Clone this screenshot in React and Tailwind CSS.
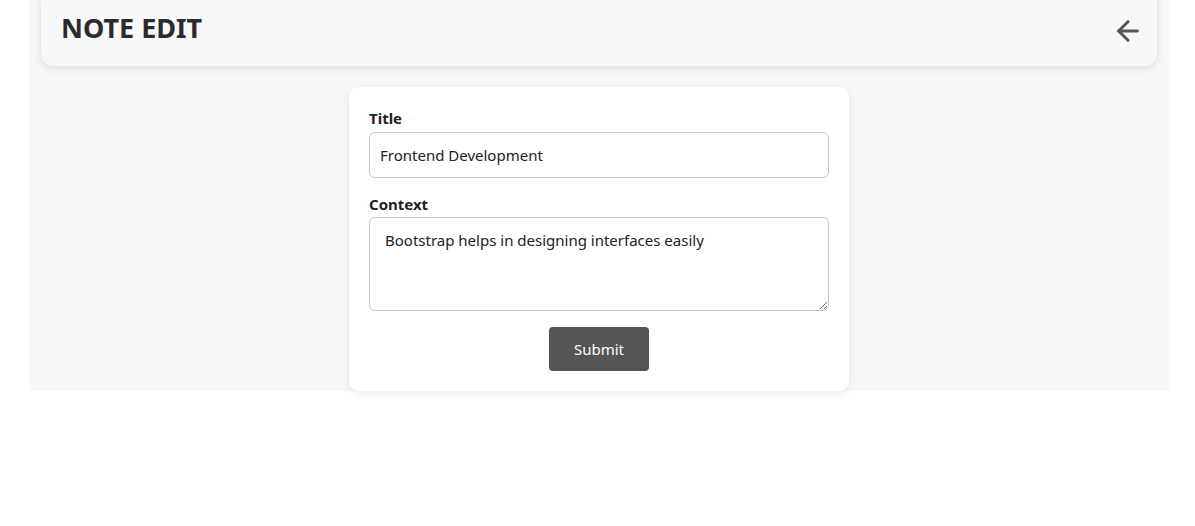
import React, { useState } from 'react';
import { ArrowLeft } from 'lucide-react';

const App = () => {
    const [title, setTitle] = useState('Frontend Development');
    const [context, setContext] = useState('Bootstrap helps in designing interfaces easily');

    return (
        <div className="min-h-[526px] bg-white" style={{ fontFamily: '"Noto Sans", sans-serif' }}>
            <div className="ml-[29px] w-[1140px] bg-[#f7f8fa] px-3">
                {/* Header */}
                <div className="-mt-[10px] flex h-[76px] items-center justify-between rounded-xl bg-[#f7f8fa] pl-5 pr-[13px] shadow-[0_2px_8px_rgba(0,0,0,0.12)]">
                    <h1 className="text-[27px] font-bold text-[#2b2b2b]">NOTE EDIT</h1>
                    <button className="mt-[6px] text-[#555]">
                        <ArrowLeft size={32} strokeWidth={2.2} />
                    </button>
                </div>

                {/* Form card */}
                <div className="mx-auto mt-[21px] w-[500px] rounded-[10px] bg-white p-5 shadow-[0_2px_8px_rgba(0,0,0,0.08)]">
                    <form onSubmit={(e) => e.preventDefault()}>
                        <label className="block text-[15px] font-bold text-[#222]">Title</label>
                        <input
                            type="text"
                            value={title}
                            onChange={(e) => setTitle(e.target.value)}
                            className="mt-[2px] h-[46px] w-full rounded-md border border-[#c8c8c8] px-[10px] text-[15px] text-[#222] outline-none"
                        />

                        <label className="mt-[15px] block text-[15px] font-bold text-[#222]">Context</label>
                        <textarea
                            value={context}
                            onChange={(e) => setContext(e.target.value)}
                            className="mt-[2px] block h-[94px] w-full rounded-md border border-[#c8c8c8] px-[15px] pt-[11px] pb-2 text-[15px] text-[#222] outline-none"
                        />

                        <div className="mt-4 flex justify-center">
                            <button type="submit" className="h-[44px] w-[100px] rounded bg-[#555] text-[15px] text-white">
                                Submit
                            </button>
                        </div>
                    </form>
                </div>
            </div>
        </div>
    );
};

export default App;
